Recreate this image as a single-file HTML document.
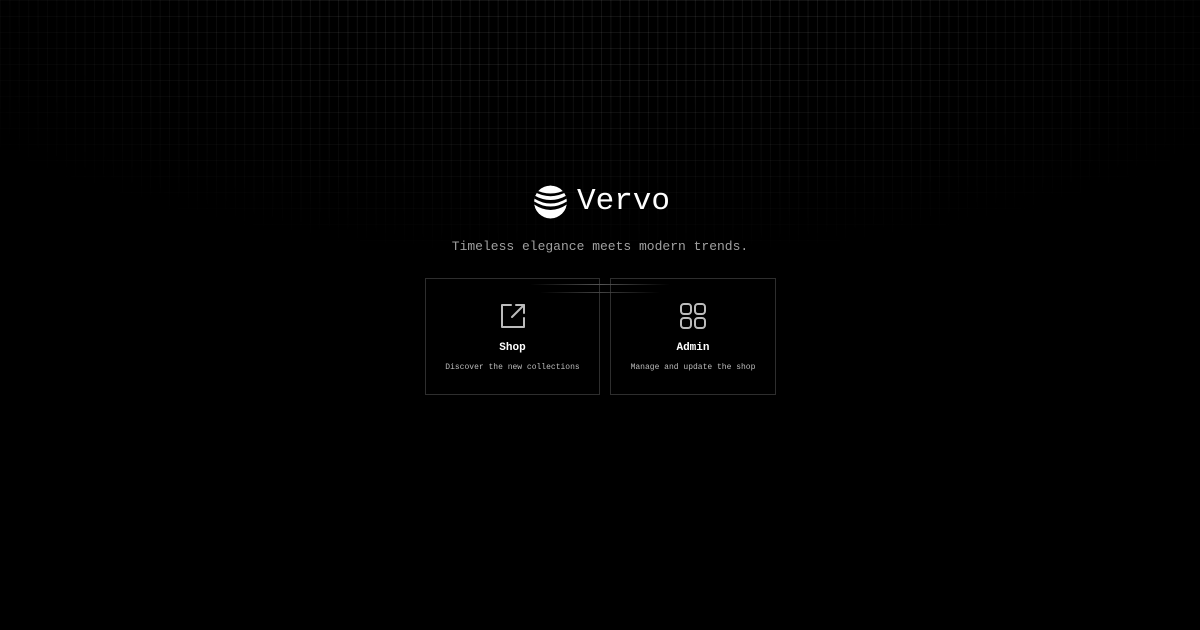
<!DOCTYPE html>
<html><head><meta charset="utf-8"><style>
html,body{margin:0;width:1200px;height:630px;background:#000;overflow:hidden;font-family:"Liberation Mono",monospace;color:#fff}
.grid{position:absolute;left:0;top:0;width:1200px;height:630px;
background-image:linear-gradient(to right,rgba(255,255,255,.07) 1px,transparent 1px),linear-gradient(to bottom,rgba(255,255,255,.07) 1px,transparent 1px);
background-size:9.4px 16px;
-webkit-mask-image:radial-gradient(ellipse 750px 260px at 50% 0%,#000 30%,transparent 100%);
mask-image:radial-gradient(ellipse 750px 260px at 50% 0%,#000 30%,transparent 100%)}
.logo{position:absolute;left:534px;top:184px;display:flex;align-items:center}
.logo span{font-size:31px;margin-left:10px}
.tag{position:absolute;top:239px;left:0;width:1200px;text-align:center;font-size:13px;color:#a0a0a0}
.card{position:absolute;top:278px;height:115px;border:1px solid #2e2e2e;background:#000;text-align:center}
.card h3{margin:0;position:absolute;top:63px;width:100%;font-size:11px;font-weight:bold}
.card p{margin:0;position:absolute;top:84px;width:100%;font-size:8px;color:#bbb}
.card svg{position:absolute;top:23px;left:50%;margin-left:-14px}
.glow{position:absolute;top:284px;left:530px;width:140px;height:1px;background:linear-gradient(90deg,transparent,#555,transparent)}
.glow2{position:absolute;top:292px;left:540px;width:120px;height:1px;background:linear-gradient(90deg,transparent,#444,transparent)}
</style></head><body>
<div class="grid"></div>
<div class="logo">
<svg width="33" height="34" viewBox="0 0 33 34"><defs><clipPath id="c"><circle cx="16.5" cy="17" r="16.5"/></clipPath></defs>
<g clip-path="url(#c)"><circle cx="16.5" cy="17" r="16.5" fill="#fff"/>
<path d="M-2 3 Q16.5 14 35 3 L35 5.5 Q16.5 17 -2 5.5Z" fill="#000"/>
<path d="M-2 9 Q16.5 21 35 9 L35 12 Q16.5 25 -2 12Z" fill="#000"/>
<path d="M-2 15 Q16.5 28 35 15 L35 18 Q16.5 32 -2 18Z" fill="#000"/></g></svg>
<span>Vervo</span></div>
<div class="tag">Timeless elegance meets modern trends.</div>
<div class="card" style="left:425px;width:173px">
<svg width="28" height="28" viewBox="0 0 28 28" fill="none" stroke="#bbb" stroke-width="2" stroke-linecap="round" stroke-linejoin="round"><path d="M12 3H3v22h22v-9"/><path d="M13 15L25 3"/><path d="M17 3h8v8"/></svg>
<h3>Shop</h3><p>Discover the new collections</p></div>
<div class="card" style="left:610px;width:164px">
<svg width="28" height="28" viewBox="0 0 28 28" fill="none" stroke="#bbb" stroke-width="2"><rect x="2" y="2" width="10" height="10" rx="3"/><rect x="16" y="2" width="10" height="10" rx="3"/><rect x="2" y="16" width="10" height="10" rx="3"/><rect x="16" y="16" width="10" height="10" rx="3"/></svg>
<h3>Admin</h3><p>Manage and update the shop</p></div>
<div class="glow"></div><div class="glow2"></div>
</body></html>
